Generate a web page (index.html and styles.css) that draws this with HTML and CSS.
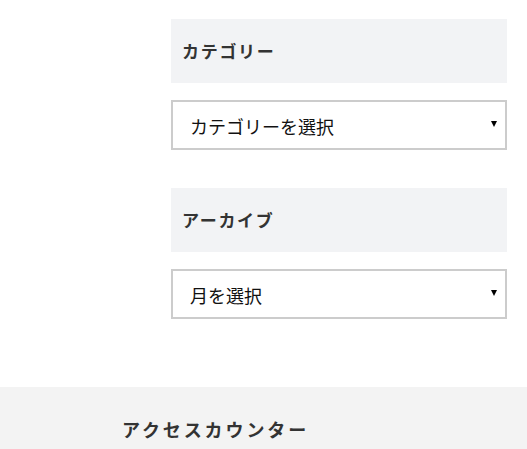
FILE: index.html
```html
<!DOCTYPE html>
<html lang="ja">
<head>
<meta charset="utf-8">
<title>Sidebar</title>
<link rel="stylesheet" href="styles.css">
</head>
<body>
<div class="page">
  <aside class="sidebar">
    <section class="widget">
      <h2 class="widget-title">カテゴリー</h2>
      <div class="select"><span class="select-label">カテゴリーを選択</span><span class="arrow"></span></div>
    </section>
    <section class="widget">
      <h2 class="widget-title">アーカイブ</h2>
      <div class="select"><span class="select-label">月を選択</span><span class="arrow"></span></div>
    </section>
  </aside>
  <footer class="footer">
    <h2 class="footer-title">アクセスカウンター</h2>
  </footer>
</div>
</body>
</html>
```
FILE: styles.css
```css
html, body {
  margin: 0;
  padding: 0;
  background: #fff;
}
body {
  font-family: "Noto Sans CJK JP", "Noto Sans", sans-serif;
  color: #333;
}
.sidebar {
  width: 336px;
  margin-left: 171px;
  padding-top: 19px;
  display: flex;
  flex-direction: column;
  gap: 38px;
  padding-bottom: 68px;
}
.widget {
  display: flex;
  flex-direction: column;
  gap: 17px;
}
.widget-title {
  margin: 0;
  height: 64px;
  box-sizing: border-box;
  padding: 0 11px 2px;
  display: flex;
  align-items: center;
  background: #f2f3f5;
  font-size: 17px;
  font-weight: bold;
  letter-spacing: 0.1em;
  color: #333;
}
.select {
  height: 50px;
  box-sizing: border-box;
  border: 2px solid #cccccc;
  background: #fff;
  display: flex;
  align-items: center;
  justify-content: space-between;
  padding: 2px 8px 0 17px;
  font-size: 18px;
  color: #111;
}
.arrow {
  width: 0;
  height: 0;
  border-left: 3px solid transparent;
  border-right: 3px solid transparent;
  border-top: 6px solid #000;
  margin-top: -4px;
}
.footer {
  background: #f3f3f3;
  padding: 30px 0 20px 122px;
}
.footer-title {
  margin: 0;
  font-size: 18px;
  line-height: 25px;
  font-weight: bold;
  letter-spacing: 0.16em;
  color: #333;
}
```
